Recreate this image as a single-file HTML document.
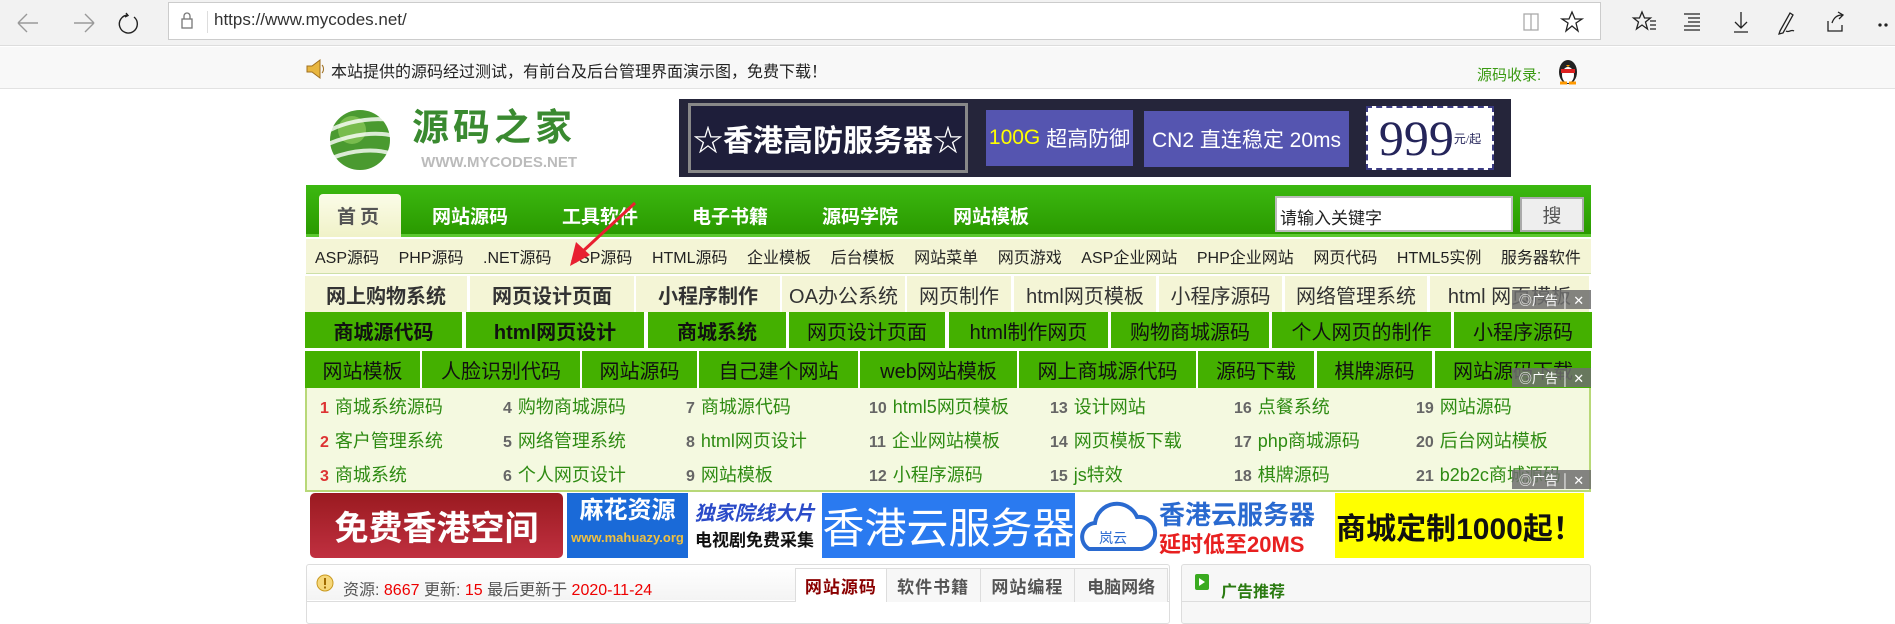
<!DOCTYPE html>
<html><head><meta charset="utf-8"><style>
*{margin:0;padding:0;box-sizing:border-box}
body{width:1895px;height:611px;overflow:hidden;background:#fff;font-family:"Liberation Sans","Noto Sans CJK SC",sans-serif;position:relative}
.a{position:absolute}
.c{display:flex;align-items:center;justify-content:center;white-space:nowrap}
.r1{background:#f4f5d6;color:#333;font-size:20px}
.r2{background:#44b000;color:#111;font-size:20px}
.b{font-weight:bold}
.hot{font-size:18px;color:#2e8b12;white-space:nowrap}
.hot div{height:34px;line-height:34px;overflow:visible}
.hot i{font-style:normal;font-weight:bold;color:#666;font-size:16px;margin-right:6px}
.hot i.red{color:#d33}
.adl{background:rgba(110,110,110,.85);color:#fff;font-size:13px;width:79px;height:19px}
</style></head><body>
<!-- browser bar -->
<div class="a" style="left:0;top:0;width:1895px;height:46px;background:#f2f2f2;border-bottom:1px solid #ddd"></div>
<svg class="a" style="left:14px;top:10px" width="140" height="26" viewBox="0 0 140 26" fill="none" stroke="#999" stroke-width="1.4"><path d="M4 13h20M4 13l9-9M4 13l9 9"/><path d="M60 13h20M80 13l-9-9M80 13l-9 9"/><path stroke="#222" d="M114 5a9 9 0 1 0 6 2M112 3l2 2.5-3 1.5"/></svg>
<div class="a" style="left:168px;top:2px;width:1433px;height:38px;background:#fff;border:1px solid #ccc"></div>
<svg class="a" style="left:180px;top:11px" width="14" height="18" viewBox="0 0 14 18" fill="none" stroke="#777" stroke-width="1.3"><rect x="2" y="8" width="10" height="9"/><path d="M4 8V5a3 3 0 0 1 6 0v3"/></svg>
<div class="a" style="left:207px;top:11px;width:1px;height:22px;background:#ddd"></div>
<div class="a" style="left:214px;top:10px;font-size:17px;color:#333">https://www.mycodes.net/</div>
<svg class="a" style="left:1520px;top:10px" width="80" height="24" viewBox="0 0 80 24" fill="none" stroke="#aaa" stroke-width="1.3"><rect x="4" y="4" width="14" height="16"/><path d="M11 4v16"/><path stroke="#222" d="M52 2l3 7h7l-6 4 2 8-6-5-6 5 2-8-6-4h7z"/></svg>
<svg class="a" style="left:1630px;top:9px" width="265" height="26" viewBox="0 0 265 26" fill="none" stroke="#222" stroke-width="1.3"><path d="M12 3l2.5 6h6l-5 4 2 7-5.5-4-5.5 4 2-7-5-4h6zM20 12h6M20 16h6M20 20h6"/><path d="M54 5h16M58 9h12M58 13h12M54 17h16M54 21h16"/><path d="M111 3v16M105 13l6 6 6-6M104 23h14"/><path d="M150 22l10-18 3 2-10 18-4 1zM156 22c3 2 5-2 8 0"/><path d="M198 12v10h14v-6M202 14c2-6 6-8 10-8M208 3l5 3-4 4"/><circle cx="250" cy="16" r="1" fill="#222"/><circle cx="256" cy="16" r="1" fill="#222"/></svg>
<!-- notice bar -->
<div class="a" style="left:0;top:47px;width:1895px;height:42px;background:#f8f8f8;border-bottom:1px solid #e2e2e2"></div>
<svg class="a" style="left:304px;top:58px" width="22" height="22" viewBox="0 0 22 22"><path d="M3 8h5l8-6v18l-8-6H3z" fill="#e8b640" stroke="#a07020"/><path d="M18 7c2 2 2 6 0 8" stroke="#a07020" fill="none"/></svg>
<div class="a" style="left:331px;top:58px;font-size:16px;color:#222">本站提供的源码经过测试，有前台及后台管理界面演示图，免费下载！</div>
<div class="a" style="left:1477px;top:64px;font-size:15px;color:#3a9a12">源码收录:</div>
<svg class="a" style="left:1557px;top:55px" width="22" height="30" viewBox="0 0 22 30"><ellipse cx="11" cy="17" rx="9" ry="12" fill="#222"/><ellipse cx="11" cy="20" rx="6" ry="8" fill="#fff"/><rect x="4" y="14" width="14" height="4" fill="#d22"/><path d="M9 10l2 2 2-2z" fill="#f90"/><path d="M3 28h7M12 28h7" stroke="#f90" stroke-width="3"/></svg>
<!-- logo -->
<svg class="a" style="left:322px;top:102px" width="80" height="72" viewBox="0 0 80 72"><circle cx="38" cy="38" r="30" fill="#4a9a30"/><circle cx="30" cy="28" r="14" fill="#8ccb5a" opacity=".7"/><path d="M8 28c20-10 50-14 68-8M6 42c24-10 52-14 72-6M10 56c20-8 44-10 60-4" stroke="#fff" stroke-width="4" fill="none" opacity=".8"/></svg>
<div class="a" style="left:412px;top:106px;font-size:37px;font-weight:bold;color:#3a8a30;letter-spacing:4px;line-height:44px">源码之家</div>
<div class="a" style="left:415px;top:154px;width:162px;font-size:15px;color:#bbb;font-weight:bold;text-align:right">WWW.MYCODES.NET</div>
<!-- banner -->
<div class="a" style="left:679px;top:99px;width:832px;height:78px;background:#25253a"></div>
<div class="a c" style="left:688px;top:103px;width:280px;height:70px;background:#1e1e3a;border:3px solid #888;color:#fff;font-size:30px;font-weight:bold">☆香港高防服务器☆</div>
<div class="a c" style="left:986px;top:110px;width:147px;height:56px;background:#5555b0;color:#fff;font-size:21px"><span style="color:#ff0">100G</span>&nbsp;超高防御</div>
<div class="a c" style="left:1144px;top:111px;width:205px;height:56px;background:#5555b0;color:#fff;font-size:21px">CN2 直连稳定 20ms</div>
<div class="a c" style="left:1366px;top:106px;width:128px;height:64px;background:#fff;border:2px dashed #3a3a80;color:#25255a;font-size:50px;font-family:'Liberation Serif',serif">999<span style="font-size:12px">元/起</span></div>
<!-- nav -->
<div class="a" style="left:306px;top:185px;width:1285px;height:52px;background:linear-gradient(#3cb810,#2a9a00);border-bottom:3px solid #5cc830"></div>
<div class="a c" style="left:319px;top:194px;width:82px;height:43px;background:linear-gradient(#fbfce8,#f0f2c8);border-radius:4px 4px 0 0;color:#555;font-size:19px;font-weight:bold;letter-spacing:4px">首页</div>
<div class="a" style="left:432px;top:202px;font-size:19px;font-weight:bold;color:#fff">网站源码</div>
<div class="a" style="left:562px;top:202px;font-size:19px;font-weight:bold;color:#fff">工具软件</div>
<div class="a" style="left:692px;top:202px;font-size:19px;font-weight:bold;color:#fff">电子书籍</div>
<div class="a" style="left:822px;top:202px;font-size:19px;font-weight:bold;color:#fff">源码学院</div>
<div class="a" style="left:953px;top:202px;font-size:19px;font-weight:bold;color:#fff">网站模板</div>
<div class="a" style="left:1275px;top:196px;width:238px;height:36px;background:#fff;border:2px solid #bbb;font-size:17px;padding:6px 3px;color:#222">请输入关键字</div>
<div class="a c" style="left:1520px;top:197px;width:64px;height:35px;background:#eee;border:2px solid #aaa;font-size:19px;color:#555">搜</div>
<!-- sub nav -->
<div class="a" style="left:306px;top:239px;width:1285px;height:35px;background:#f4f5d6;border-bottom:1px solid #cde0a8;display:flex;justify-content:space-between;align-items:center;padding:0 10px 0 9px;font-size:16px;color:#222">
<span>ASP源码</span><span>PHP源码</span><span>.NET源码</span><span>JSP源码</span><span>HTML源码</span><span>企业模板</span><span>后台模板</span><span>网站菜单</span><span>网页游戏</span><span>ASP企业网站</span><span>PHP企业网站</span><span>网页代码</span><span>HTML5实例</span><span>服务器软件</span></div>
<!-- row1 -->
<div class="a c r1 b" style="left:305px;top:276px;width:162px;height:36px">网上购物系统</div>
<div class="a c r1 b" style="left:470px;top:276px;width:164px;height:36px">网页设计页面</div>
<div class="a c r1 b" style="left:636px;top:276px;width:144px;height:36px">小程序制作</div>
<div class="a c r1" style="left:782px;top:276px;width:123px;height:36px">OA办公系统</div>
<div class="a c r1" style="left:907px;top:276px;width:104px;height:36px">网页制作</div>
<div class="a c r1" style="left:1014px;top:276px;width:142px;height:36px">html网页模板</div>
<div class="a c r1" style="left:1159px;top:276px;width:123px;height:36px">小程序源码</div>
<div class="a c r1" style="left:1285px;top:276px;width:142px;height:36px">网络管理系统</div>
<div class="a c r1" style="left:1430px;top:276px;width:159px;height:36px">html 网页模板</div>
<!-- row2 -->
<div class="a c r2 b" style="left:305px;top:312px;width:157px;height:36px">商城源代码</div>
<div class="a c r2 b" style="left:466px;top:312px;width:178px;height:36px">html网页设计</div>
<div class="a c r2 b" style="left:648px;top:312px;width:138px;height:36px">商城系统</div>
<div class="a c r2" style="left:789px;top:312px;width:156px;height:36px">网页设计页面</div>
<div class="a c r2" style="left:949px;top:312px;width:159px;height:36px">html制作网页</div>
<div class="a c r2" style="left:1111px;top:312px;width:158px;height:36px">购物商城源码</div>
<div class="a c r2" style="left:1272px;top:312px;width:179px;height:36px">个人网页的制作</div>
<div class="a c r2" style="left:1454px;top:312px;width:138px;height:36px">小程序源码</div>
<!-- row3 -->
<div class="a c r2" style="left:305px;top:351px;width:115px;height:37px">网站模板</div>
<div class="a c r2" style="left:422px;top:351px;width:158px;height:37px">人脸识别代码</div>
<div class="a c r2" style="left:582px;top:351px;width:115px;height:37px">网站源码</div>
<div class="a c r2" style="left:699px;top:351px;width:159px;height:37px">自己建个网站</div>
<div class="a c r2" style="left:860px;top:351px;width:157px;height:37px">web网站模板</div>
<div class="a c r2" style="left:1019px;top:351px;width:177px;height:37px">网上商城源代码</div>
<div class="a c r2" style="left:1198px;top:351px;width:116px;height:37px">源码下载</div>
<div class="a c r2" style="left:1317px;top:351px;width:115px;height:37px">棋牌源码</div>
<div class="a c r2" style="left:1435px;top:351px;width:156px;height:37px">网站源码下载</div>
<!-- hot list -->
<div class="a" style="left:305px;top:388px;width:1286px;height:104px;background:#f4f9e0;border:2px solid #b8d878;border-top:none"></div>
<div class="a hot" style="left:320px;top:390px"><div><i class="red">1</i>商城系统源码</div><div><i class="red">2</i>客户管理系统</div><div><i class="red">3</i>商城系统</div></div>
<div class="a hot" style="left:503px;top:390px"><div><i>4</i>购物商城源码</div><div><i>5</i>网络管理系统</div><div><i>6</i>个人网页设计</div></div>
<div class="a hot" style="left:686px;top:390px"><div><i>7</i>商城源代码</div><div><i>8</i>html网页设计</div><div><i>9</i>网站模板</div></div>
<div class="a hot" style="left:869px;top:390px"><div><i>10</i>html5网页模板</div><div><i>11</i>企业网站模板</div><div><i>12</i>小程序源码</div></div>
<div class="a hot" style="left:1050px;top:390px"><div><i>13</i>设计网站</div><div><i>14</i>网页模板下载</div><div><i>15</i>js特效</div></div>
<div class="a hot" style="left:1234px;top:390px"><div><i>16</i>点餐系统</div><div><i>17</i>php商城源码</div><div><i>18</i>棋牌源码</div></div>
<div class="a hot" style="left:1416px;top:390px"><div><i>19</i>网站源码</div><div><i>20</i>后台网站模板</div><div><i>21</i>b2b2c商城源码</div></div>
<!-- ad labels -->
<div class="a c adl" style="left:1512px;top:290px">◎广告 │ ✕</div>
<div class="a c adl" style="left:1512px;top:368px">◎广告 │ ✕</div>
<div class="a c adl" style="left:1512px;top:470px">◎广告 │ ✕</div>
<!-- ads -->
<div class="a c" style="left:310px;top:493px;width:253px;height:65px;background:linear-gradient(#9a1a20,#c03040);border-radius:5px;color:#fff;font-size:34px;font-weight:bold">免费香港空间</div>
<div class="a" style="left:567px;top:493px;width:121px;height:65px;background:#1a6ad8;color:#fff;font-size:24px;font-weight:bold;text-align:center;line-height:36px">麻花资源<div style="font-size:13px;color:#f0c040;line-height:18px">www.mahuazy.org</div></div>
<div class="a" style="left:688px;top:493px;width:133px;height:65px;background:#fff;text-align:center"><div style="color:#2a4ac8;font-size:20px;font-style:italic;font-weight:bold;margin-top:4px">独家院线大片</div><div style="font-size:17px;color:#111;font-weight:bold">电视剧免费采集</div></div>
<div class="a c" style="left:822px;top:493px;width:253px;height:65px;background:#2a7af0;color:#fff;font-size:42px">香港云服务器</div>
<div class="a" style="left:1077px;top:493px;width:255px;height:65px;background:#fff"><svg class="a" style="left:2px;top:6px" width="85" height="56" viewBox="0 0 85 56" fill="none" stroke="#2a6ad0" stroke-width="4"><path d="M10 50a14 14 0 0 1 6-26 22 22 0 0 1 42-6 16 16 0 0 1 4 32z"/><text x="20" y="44" font-size="14" fill="#2a6ad0" stroke="none">岚云</text></svg><div class="a" style="left:82px;top:2px;color:#2a6ad0;font-size:26px;font-weight:bold">香港云服务器</div><div class="a" style="left:82px;top:34px;color:#e82020;font-size:22px;font-weight:bold">延时低至20MS</div></div>
<div class="a c" style="left:1335px;top:493px;width:249px;height:65px;background:#ffff00;color:#111;font-size:30px;font-weight:bold">商城定制1000起！</div>
<!-- bottom panels -->
<div class="a" style="left:306px;top:564px;width:864px;height:60px;border:1px solid #ddd;border-radius:3px;background:linear-gradient(#fff,#f4f4f4 60%,#fff 60%)"></div>
<div class="a" style="left:306px;top:601px;width:864px;height:1px;background:#ddd"></div>
<svg class="a" style="left:316px;top:574px" width="18" height="18" viewBox="0 0 18 18"><circle cx="9" cy="9" r="8" fill="#f6d77a" stroke="#c99a20"/><rect x="8" y="4" width="2" height="7" fill="#a06a00"/><rect x="8" y="12.5" width="2" height="2" fill="#a06a00"/></svg>
<div class="a" style="left:343px;top:576px;font-size:16px;color:#555">资源: <span style="color:#e00">8667</span> 更新: <span style="color:#e00">15</span> 最后更新于 <span style="color:#e00">2020-11-24</span></div>
<div class="a" style="left:795px;top:568px;width:373px;height:34px;display:flex;background:#f7f7f7;border:1px solid #ddd;border-bottom:none">
<div class="c" style="width:91px;background:#fff;color:#8a0000;font-weight:bold;font-size:17px;border-right:1px solid #ddd;letter-spacing:1px">网站源码</div>
<div class="c" style="width:94px;color:#555;font-weight:bold;font-size:17px;border-right:1px solid #ddd;letter-spacing:1px">软件书籍</div>
<div class="c" style="width:95px;color:#555;font-weight:bold;font-size:17px;border-right:1px solid #ddd;letter-spacing:1px">网站编程</div>
<div class="c" style="width:92px;color:#555;font-weight:bold;font-size:17px">电脑网络</div></div>
<div class="a" style="left:1181px;top:564px;width:410px;height:60px;border:1px solid #ddd;border-radius:3px;background:#f7f7f7"></div>
<div class="a" style="left:1181px;top:601px;width:410px;height:1px;background:#ddd"></div>
<svg class="a" style="left:1194px;top:573px" width="16" height="18" viewBox="0 0 16 18"><rect x="1" y="1" width="14" height="16" rx="2" fill="#3aaa20"/><path d="M5 5l6 4-6 4z" fill="#fff"/></svg>
<div class="a" style="left:1221px;top:578px;font-size:16px;font-weight:bold;color:#2a7a10">广告推荐</div>
<!-- red arrow -->
<svg class="a" style="left:560px;top:200px" width="80" height="70" viewBox="0 0 80 70"><path d="M75 3L22 52" stroke="#e82030" stroke-width="3"/><path d="M10 66l6-24 14 13z" fill="#e82030"/></svg>
</body></html>
